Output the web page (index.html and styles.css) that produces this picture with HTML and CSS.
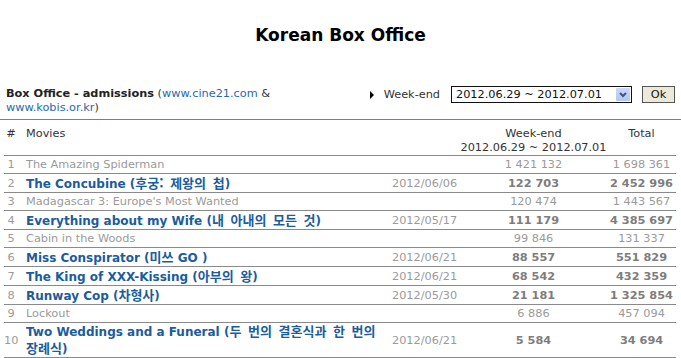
FILE: index.html
```html
<!DOCTYPE html>
<html lang="en">
<head>
<meta charset="utf-8">
<title>Korean Box Office</title>
<link rel="stylesheet" href="styles.css">
</head>
<body>
<h1 class="title">Korean Box Office</h1>
<div class="toolbar">
  <div class="source"><b>Box Office - admissions</b> (<a href="#">www.cine21.com</a> &amp; <a href="#">www.kobis.or.kr</a>)</div>
  <form class="filter">
    <span class="bullet"></span>
    <span class="label">Week-end</span>
    <div class="select">
      <span class="select-value">2012.06.29 ~ 2012.07.01</span>
      <span class="select-arrow"><svg width="14" height="13" viewBox="0 0 14 13"><path d="M4 5 L7 8 L10 5" fill="none" stroke="#3e5585" stroke-width="2"/></svg></span>
    </div>
    <button type="button" class="ok">Ok</button>
  </form>
</div>
<table class="chart">
  <colgroup>
    <col class="c-rank"><col class="c-movie"><col class="c-date"><col class="c-week"><col class="c-total">
  </colgroup>
  <thead>
    <tr><th class="rank">#</th><th class="movie">Movies</th><th></th><th class="num">Week-end<br>2012.06.29 ~ 2012.07.01</th><th class="num">Total</th></tr>
  </thead>
  <tbody>
    <tr><td class="rank">1</td><td class="movie">The Amazing Spiderman</td><td class="date"></td><td class="num">1 421 132</td><td class="num">1 698 361</td></tr>
    <tr class="featured"><td class="rank">2</td><td class="movie"><a href="#">The Concubine (<span lang="ko">후궁: 제왕의 첩</span>)</a></td><td class="date">2012/06/06</td><td class="num">122 703</td><td class="num">2 452 996</td></tr>
    <tr><td class="rank">3</td><td class="movie">Madagascar 3: Europe's Most Wanted</td><td class="date"></td><td class="num">120 474</td><td class="num">1 443 567</td></tr>
    <tr class="featured"><td class="rank">4</td><td class="movie"><a href="#">Everything about my Wife (<span lang="ko">내 아내의 모든 것</span>)</a></td><td class="date">2012/05/17</td><td class="num">111 179</td><td class="num">4 385 697</td></tr>
    <tr><td class="rank">5</td><td class="movie">Cabin in the Woods</td><td class="date"></td><td class="num">99 846</td><td class="num">131 337</td></tr>
    <tr class="featured"><td class="rank">6</td><td class="movie"><a href="#">Miss Conspirator (<span lang="ko">미쓰</span> GO )</a></td><td class="date">2012/06/21</td><td class="num">88 557</td><td class="num">551 829</td></tr>
    <tr class="featured"><td class="rank">7</td><td class="movie"><a href="#">The King of XXX-Kissing (<span lang="ko">아부의 왕</span>)</a></td><td class="date">2012/06/21</td><td class="num">68 542</td><td class="num">432 359</td></tr>
    <tr class="featured"><td class="rank">8</td><td class="movie"><a href="#">Runway Cop (<span lang="ko">차형사</span>)</a></td><td class="date">2012/05/30</td><td class="num">21 181</td><td class="num">1 325 854</td></tr>
    <tr><td class="rank">9</td><td class="movie">Lockout</td><td class="date"></td><td class="num">6 886</td><td class="num">457 094</td></tr>
    <tr class="featured long"><td class="rank">10</td><td class="movie"><a href="#">Two Weddings and a Funeral (<span lang="ko">두 번의 결혼식과 한 번의 장례식</span>)</a></td><td class="date">2012/06/21</td><td class="num">5 584</td><td class="num">34 694</td></tr>
  </tbody>
</table>
</body>
</html>
```
FILE: styles.css
```css
body {
  margin: 0;
  background: #fff;
  color: #333;
  font-family: "DejaVu Sans", Verdana, "Noto Sans CJK KR", sans-serif;
  font-size: 11.3px;
}

a {
  color: #1f6aae;
  text-decoration: none;
}

[lang="ko"] {
  font-family: "Noto Sans CJK KR", "DejaVu Sans", sans-serif;
  font-size: 13px;
  word-spacing: 3px;
}

.title {
  margin: 0;
  padding-top: 25px;
  text-align: center;
  font-size: 17px;
  line-height: 20px;
  font-weight: bold;
  color: #000;
}

.toolbar {
  display: flex;
  justify-content: space-between;
  align-items: flex-start;
  margin-top: 40px;
  padding: 0 6px 4px;
  border-bottom: 1px solid #a27a3a;
}

.source {
  width: 330px;
  padding-top: 2px;
  line-height: 14px;
}

.source b {
  color: #222;
}

.filter {
  display: flex;
  align-items: center;
  margin: 1px 0 0;
}

.bullet {
  width: 0;
  height: 0;
  border-left: 4px solid #000;
  border-top: 4px solid transparent;
  border-bottom: 4px solid transparent;
  margin-right: 10px;
}

.label {
  color: #333;
  margin-right: 11px;
}

.select {
  box-sizing: border-box;
  width: 181px;
  height: 17px;
  border: 1px solid #111;
  display: flex;
  align-items: center;
  justify-content: space-between;
  padding: 0 1px 0 4px;
  color: #111;
  background: #fff;
}

.select-arrow {
  display: flex;
  width: 14px;
  height: 13px;
  background: linear-gradient(#c9d9fb, #b1c6f1);
  border-radius: 1px;
}

.ok {
  box-sizing: border-box;
  margin-left: 10px;
  width: 33px;
  height: 17px;
  padding: 0;
  background: #ece9d8;
  border: 1px solid #555;
  color: #111;
  font: inherit;
}

.chart {
  margin: 0 5px 0 4px;
  width: 672px;
  border-collapse: collapse;
  table-layout: fixed;
}

.c-rank { width: 14px; }
.c-movie { width: 362px; }
.c-date { width: 80px; }
.c-week { width: 147px; }
.c-total { width: 69px; }

.chart th {
  font-weight: normal;
  color: #333;
  vertical-align: top;
  padding: 7px 0 0;
  line-height: 14px;
  border-bottom: 1px solid #8a8a8a;
}

.chart td {
  padding: 0;
  height: 17px;
  line-height: 13px;
  color: #9a9a9a;
  border-bottom: 1px solid #8a8a8a;
  white-space: nowrap;
  vertical-align: middle;
}

.chart .rank {
  text-align: center;
}

.chart .movie {
  text-align: left;
  padding-left: 8px;
}

.chart .date {
  padding-left: 12px;
}

.chart .num {
  text-align: center;
}

.chart tr.featured td {
  height: 18px;
}

.chart tr.featured .movie a {
  color: #1b5c9c;
  font-weight: bold;
  font-size: 12px;
}

.chart tr.featured .num {
  font-weight: bold;
  color: #7d7d7d;
}

.chart tr.long td {
  height: 31px;
  border-bottom: 3px solid #8a8a8a;
}

.chart tr.long .movie {
  white-space: normal;
  line-height: 15px;
}
```
